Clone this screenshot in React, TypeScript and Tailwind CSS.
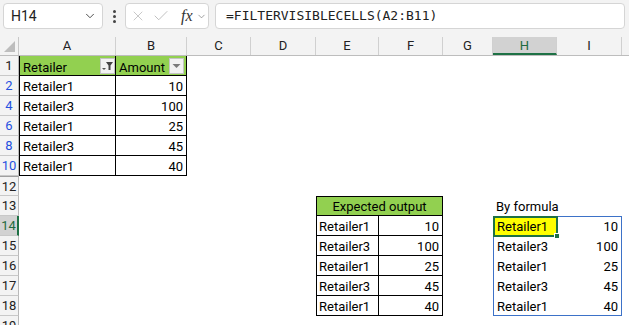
import { Check, ChevronDown, X } from "lucide-react";
import clsx from "clsx";
import type { ReactNode } from "react";

type Col = { key: string; w: string };

const cols: Col[] = [
  { key: "A", w: "w-[97px]" },
  { key: "B", w: "w-[71px]" },
  { key: "C", w: "w-[64px]" },
  { key: "D", w: "w-[65px]" },
  { key: "E", w: "w-[63px]" },
  { key: "F", w: "w-[64px]" },
  { key: "G", w: "w-[50px]" },
  { key: "H", w: "w-[64px]" },
  { key: "I", w: "w-[65px]" },
  { key: "J", w: "w-[64px]" },
];

const w = (k: string) => cols.find(c => c.key === k)!.w;

const sourceRows = [
  { n: 2, name: "Retailer1", amt: "10" },
  { n: 4, name: "Retailer3", amt: "100" },
  { n: 6, name: "Retailer1", amt: "25" },
  { n: 8, name: "Retailer3", amt: "45" },
  { n: 10, name: "Retailer1", amt: "40" },
];

const outputRows = [
  { n: 14, name: "Retailer1", amt: "10" },
  { n: 15, name: "Retailer3", amt: "100" },
  { n: 16, name: "Retailer1", amt: "25" },
  { n: 17, name: "Retailer3", amt: "45" },
  { n: 18, name: "Retailer1", amt: "40" },
];

function Cell({
  col,
  className,
  children,
}: {
  col: string;
  className?: string;
  children?: ReactNode;
}) {
  return (
    <div
      className={clsx(
        "h-[20px] shrink-0 px-[3px] pt-[2px] leading-[18px] text-[13px] whitespace-nowrap overflow-hidden",
        w(col),
        className
      )}
    >
      {children}
    </div>
  );
}

function Blank({ cols: keys }: { cols: string[] }) {
  return (
    <>
      {keys.map(k => (
        <Cell key={k} col={k} />
      ))}
    </>
  );
}

function RowHead({
  n,
  tone = "plain",
  gapAbove = false,
}: {
  n: number;
  tone?: "plain" | "filtered" | "active";
  gapAbove?: boolean;
}) {
  return (
    <div
      className={clsx(
        "w-[19px] h-[20px] shrink-0 flex items-center justify-center pt-px text-[13px] border-b border-[#c8c8c8]",
        gapAbove && "border-t border-t-[#9f9f9f]",
        tone === "active"
          ? "bg-[#d2d2d2] text-[#1e6b41] border-r-2 border-r-[#1e7145]"
          : "bg-[#f3f3f3] border-r border-r-[#b9b9b9]",
        tone === "filtered" && "text-[#2450e0]",
        tone === "plain" && "text-[#222]"
      )}
    >
      {n}
    </div>
  );
}

function FilterButton({ active }: { active?: boolean }) {
  return (
    <div className="w-[15px] h-[16px] shrink-0 bg-[#f2f2f2] border border-[#c4c4c4] flex items-center justify-center">
      {active ? (
        <svg width="13" height="12" viewBox="0 0 13 12">
          <polygon points="5,2 12,2 9.5,5.5 9.5,10 7.5,10 7.5,5.5" fill="#444" />
          <polygon points="1,8 5,8 3,10" fill="#555" />
        </svg>
      ) : (
        <svg width="9" height="6" viewBox="0 0 9 6">
          <polygon points="0.5,1 8.5,1 4.5,5" fill="#7a7a7a" />
        </svg>
      )}
    </div>
  );
}

function FormulaBar() {
  return (
    <div className="h-[37px] bg-[#f3f3f3] flex items-start pt-[3px] pl-[3px]">
      <div className="w-[100px] h-[26px] bg-white border border-[#d5d5d5] rounded-[4px] flex items-center justify-between pl-[7px] pr-[5px]">
        <span className="text-[14px] text-[#222]">H14</span>
        <ChevronDown size={14} strokeWidth={1.6} className="text-[#444]" />
      </div>
      <div className="w-[22px] h-[26px] flex flex-col items-center justify-center gap-[2px]">
        <span className="w-[3px] h-[3px] rounded-full bg-[#444]" />
        <span className="w-[3px] h-[3px] rounded-full bg-[#444]" />
        <span className="w-[3px] h-[3px] rounded-full bg-[#444]" />
      </div>
      <div className="w-[84px] h-[26px] bg-white border border-[#d5d5d5] rounded-[4px] flex items-center pl-[4px]">
        <X size={16} strokeWidth={1.1} className="text-[#b3b3b3]" />
        <Check size={18} strokeWidth={1.1} className="ml-[6px] text-[#b3b3b3]" />
        <span className="ml-[11px] text-[16px] italic text-[#333] font-['Liberation_Serif',serif] leading-none">
          fx
        </span>
        <ChevronDown size={11} strokeWidth={1.5} className="ml-[3px] text-[#777]" />
      </div>
      <div className="ml-[6px] w-[410px] h-[26px] bg-white border border-[#d5d5d5] rounded-[4px] flex items-center pl-[10px]">
        <span className="text-[13px] text-[#222] font-['DejaVu_Sans_Mono',monospace]">
          =FILTERVISIBLECELLS(A2:B11)
        </span>
      </div>
    </div>
  );
}

function ColumnHeaders() {
  return (
    <div className="flex h-[18px] bg-[#f3f3f3] border-b border-[#bdbdbd] box-content">
      <div className="w-[19px] h-[18px] shrink-0 border-r border-[#c8c8c8] flex items-end justify-end pr-[3px] pb-[3px]">
        <svg width="11" height="11" viewBox="0 0 11 11">
          <polygon points="11,0 11,11 0,11" fill="#bdbdbd" />
        </svg>
      </div>
      {cols.map(c => (
        <div
          key={c.key}
          className={clsx(
            "h-[18px] shrink-0 text-center text-[13px] leading-[18px] border-r border-[#d0d0d0]",
            c.w,
            c.key === "H"
              ? "bg-[#d2d2d2] text-[#1e6b41] border-b-2 border-b-[#1e7145]"
              : "text-[#222]"
          )}
        >
          {c.key === "J" ? "" : c.key}
        </div>
      ))}
    </div>
  );
}

export default function App() {
  return (
    <div className="w-[629px] h-[325px] overflow-hidden bg-white font-['Roboto',sans-serif] text-black">
      <FormulaBar />
      <ColumnHeaders />

      {/* Filtered source table */}
      <div className="flex">
        <RowHead n={1} />
        <Cell col="A" className="bg-[#92d050] border-l border-r border-b border-black flex items-start justify-between pr-0 pt-[1px]">
          <span className="pt-px">Retailer</span>
          <FilterButton active />
        </Cell>
        <Cell col="B" className="bg-[#92d050] border-r border-b border-black flex items-start justify-between pr-[2px] pt-[1px]">
          <span className="pt-px">Amount</span>
          <FilterButton />
        </Cell>
        <Blank cols={["C", "D", "E", "F", "G", "H", "I", "J"]} />
      </div>
      {sourceRows.map(r => (
        <div key={r.n} className="flex">
          <RowHead n={r.n} tone="filtered" />
          <Cell col="A" className="border-l border-r border-b border-black">
            {r.name}
          </Cell>
          <Cell col="B" className="border-r border-b border-black text-right">
            {r.amt}
          </Cell>
          <Blank cols={["C", "D", "E", "F", "G", "H", "I", "J"]} />
        </div>
      ))}

      <div className="flex">
        <RowHead n={12} gapAbove />
        <Blank cols={["A", "B", "C", "D", "E", "F", "G", "H", "I", "J"]} />
      </div>

      {/* Headings */}
      <div className="flex">
        <RowHead n={13} />
        <Blank cols={["A", "B", "C", "D"]} />
        <div className="w-[127px] h-[20px] shrink-0 pt-px leading-[18px] text-[13px] text-center bg-[#92d050] border border-black">
          Expected output
        </div>
        <Blank cols={["G"]} />
        <Cell col="H" className="overflow-visible">
          By formula
        </Cell>
        <Blank cols={["I", "J"]} />
      </div>

      {outputRows.map((r, i) => {
        const first = i === 0;
        const last = i === outputRows.length - 1;
        return (
          <div key={r.n} className="flex">
            <RowHead n={r.n} tone={first ? "active" : "plain"} />
            <Blank cols={["A", "B", "C", "D"]} />
            <Cell col="E" className="border-l border-r border-b border-black pl-[2px]">
              {r.name}
            </Cell>
            <Cell col="F" className="border-r border-b border-black text-right">
              {r.amt}
            </Cell>
            <Blank cols={["G"]} />
            <Cell
              col="H"
              className={clsx(
                "border-l border-[#3d72c8]",
                first && "relative overflow-visible bg-[#ffff00] border-t pt-px",
                last && "border-b"
              )}
            >
              {r.name}
              {first && (
                <div className="absolute -top-px left-[-1px] -right-px -bottom-px border-2 border-[#1e7145]">
                  <div className="absolute -right-[4px] -bottom-[4px] w-[6px] h-[6px] bg-[#1e7145] border border-white" />
                </div>
              )}
            </Cell>
            <Cell
              col="I"
              className={clsx(
                "border-r border-[#3d72c8] text-right pr-[3px]",
                first && "border-t pt-px",
                last && "border-b"
              )}
            >
              {r.amt}
            </Cell>
            <Blank cols={["J"]} />
          </div>
        );
      })}

      <div className="flex">
        <RowHead n={19} />
        <Blank cols={["A", "B", "C", "D", "E", "F", "G", "H", "I", "J"]} />
      </div>
    </div>
  );
}
